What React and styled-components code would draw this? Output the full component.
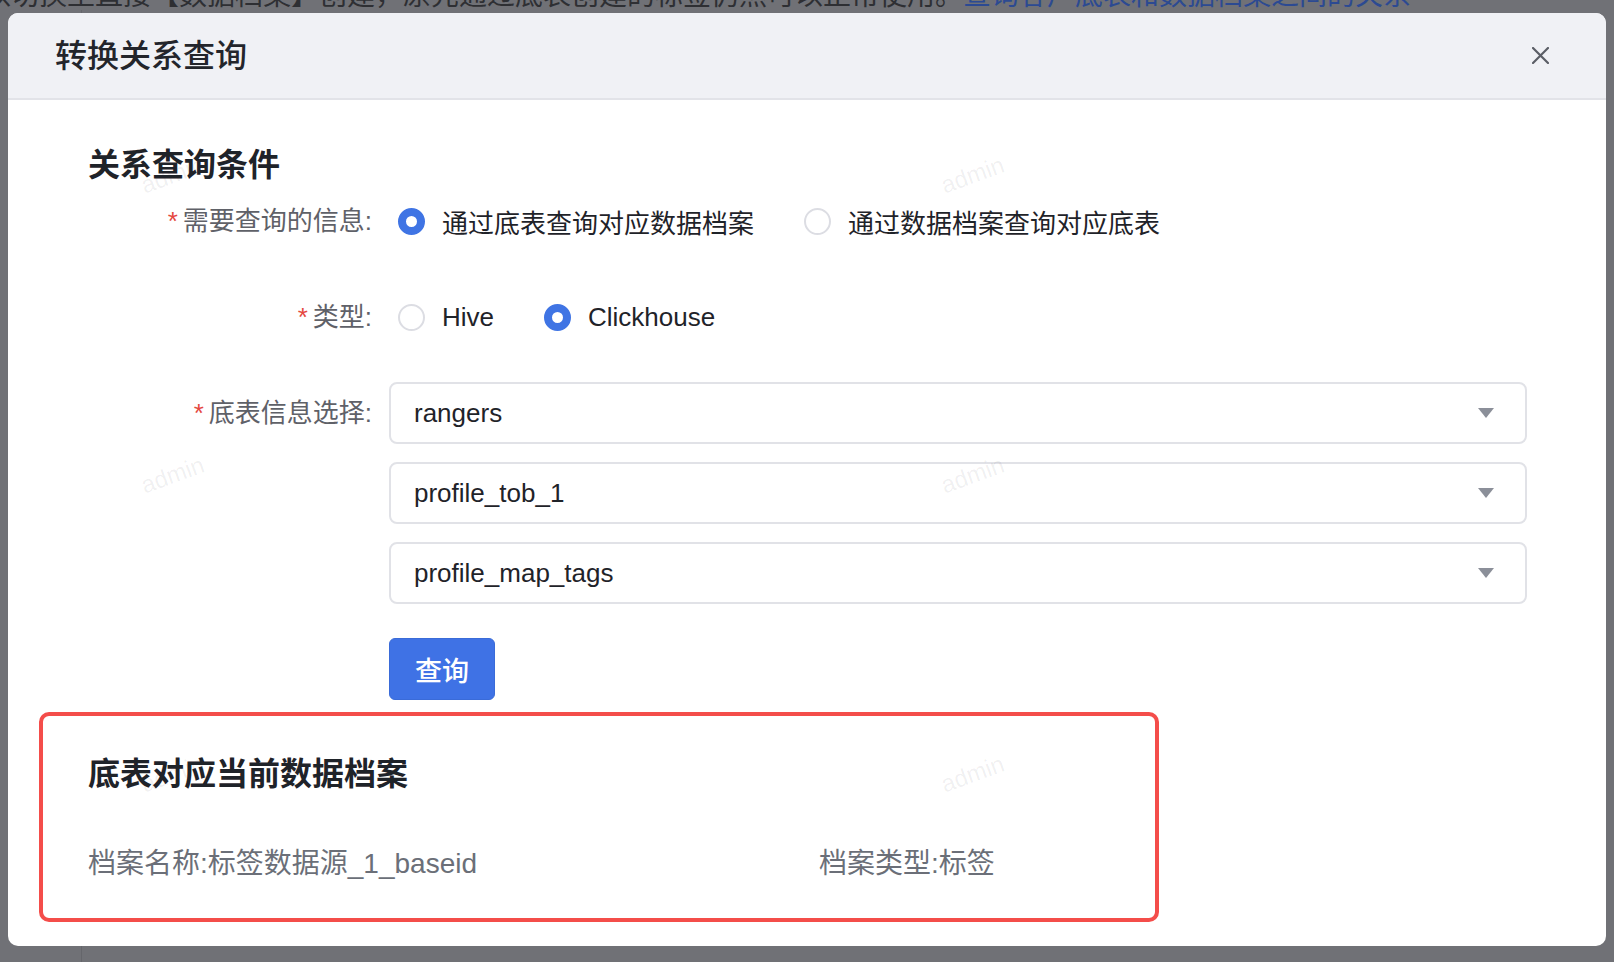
import React from "react";
import styled, { createGlobalStyle } from "styled-components";

const GlobalStyle = createGlobalStyle`
  html, body { margin: 0; padding: 0; }
  body {
    font-family: "Liberation Sans", "Noto Sans CJK SC", sans-serif;
    background: #707176;
  }
  * { box-sizing: border-box; }
`;

const Page = styled.div`
  position: relative;
  width: 1614px;
  height: 962px;
  overflow: hidden;
  background: #707176;
`;

const Backdrop = styled.div`
  display: flex;
  flex-direction: column;
  height: 100%;
`;

const PageNotice = styled.div`
  margin: -18px 0 0 -45px;
  font-size: 28px;
  line-height: 28px;
  white-space: nowrap;
  color: #2e2f33;
`;

const NoticeLink = styled.span`
  color: #2c4a92;
`;

const PageBody = styled.div`
  flex: 1;
  display: flex;
`;

const SideRail = styled.div`
  width: 82px;
  border-right: 1px solid #65666b;
`;

const Modal = styled.div`
  position: absolute;
  top: 13px;
  left: 8px;
  width: 1598px;
  height: 933px;
  background: #ffffff;
  border-radius: 10px;
  overflow: hidden;
  display: flex;
  flex-direction: column;
`;

const ModalHeader = styled.div`
  height: 87px;
  flex-shrink: 0;
  display: flex;
  align-items: center;
  justify-content: space-between;
  padding: 0 50px 0 47px;
  background: #f0f1f5;
  border-bottom: 2px solid #e2e3e8;
`;

const ModalTitle = styled.div`
  font-size: 32px;
  font-weight: 500;
  color: #23252b;
  line-height: 40px;
`;

const CloseButton = styled.button`
  width: 32px;
  height: 32px;
  padding: 0;
  border: none;
  background: transparent;
  display: flex;
  align-items: center;
  justify-content: center;
  cursor: pointer;
`;

const ModalBody = styled.div`
  position: relative;
  flex: 1;
  padding-top: 45px;
`;

const Watermark = styled.div`
  position: absolute;
  font-family: "Liberation Sans", sans-serif;
  font-size: 24px;
  line-height: 24px;
  color: rgba(40, 40, 60, 0.07);
  transform: rotate(-20deg);
  pointer-events: none;
  z-index: 2;
`;

const Section = styled.div`
  padding-left: 80px;
`;

const SectionTitle = styled.div`
  font-size: 32px;
  line-height: 40px;
  font-weight: 700;
  color: #1f2329;
  margin-bottom: 5px;
`;

const Form = styled.div`
  display: flex;
  flex-direction: column;
  gap: 34px;
`;

const FormRow = styled.div`
  display: grid;
  grid-template-columns: 284px 1138px;
  column-gap: 17px;
  align-items: start;
`;

const Label = styled.div`
  text-align: right;
  font-size: 26px;
  line-height: 62px;
  color: #5f6168;
  white-space: nowrap;
`;

const Required = styled.span`
  color: #e5483f;
  font-size: 26px;
  margin-right: 5px;
`;

const RadioGroup = styled.div`
  display: flex;
  align-items: center;
  gap: 50px;
  height: 62px;
  padding-left: 9px;
`;

const RadioOption = styled.label`
  display: inline-flex;
  align-items: center;
  gap: 17px;
  font-size: 26px;
  color: #1f2329;
  cursor: pointer;
`;

const RadioCircle = styled.span`
  width: 27px;
  height: 27px;
  border-radius: 50%;
  background: #ffffff;
  border: ${(p) => (p.$checked ? "8px solid #3f74e4" : "2px solid #dcdde3")};
  flex-shrink: 0;
`;

const SelectStack = styled.div`
  display: flex;
  flex-direction: column;
  gap: 18px;
`;

const Select = styled.div`
  height: 62px;
  border: 2px solid #e1e2e7;
  border-radius: 8px;
  display: flex;
  align-items: center;
  justify-content: space-between;
  padding: 0 31px 0 23px;
  font-size: 26px;
  color: #1f2329;
  background: #fff;
`;

const Arrow = styled.span`
  width: 0;
  height: 0;
  border-left: 8px solid transparent;
  border-right: 8px solid transparent;
  border-top: 10px solid #8b8f99;
`;

const QueryButton = styled.button`
  margin-top: 16px;
  width: 106px;
  height: 62px;
  border: 1px solid #3a6bd8;
  border-radius: 6px;
  background: #3f72e5;
  color: #ffffff;
  font-family: "Noto Sans CJK SC", sans-serif;
  font-size: 27px;
  font-weight: 500;
  padding: 0;
  cursor: pointer;
`;

const ResultBox = styled.div`
  margin: 12px 0 0 31px;
  width: 1120px;
  border: 4px solid #f44d4a;
  border-radius: 10px;
  padding: 38px 0 36px 45px;
`;

const ResultTitle = styled.div`
  font-size: 32px;
  line-height: 40px;
  font-weight: 700;
  color: #1f2329;
`;

const ResultGrid = styled.div`
  margin-top: 52px;
  display: grid;
  grid-template-columns: 731px 1fr;
`;

const ResultItem = styled.div`
  font-size: 28px;
  line-height: 36px;
  color: #6b6f78;
  white-space: nowrap;
`;

const watermarks = [
  [132, 63],
  [932, 63],
  [132, 363],
  [932, 363],
  [132, 662],
  [932, 662],
];

function Radio({ checked, children }) {
  return (
    <RadioOption>
      <RadioCircle $checked={checked} />
      <span>{children}</span>
    </RadioOption>
  );
}

export default function App() {
  return (
    <>
      <GlobalStyle />
      <Page>
        <Backdrop>
          <PageNotice>
            可以切换至直接【数据档案】创建，原先通过底表创建的标签仍然可以正常使用。
            <NoticeLink>查询客户底表和数据档案之间的关系</NoticeLink>
          </PageNotice>
          <PageBody>
            <SideRail />
          </PageBody>
        </Backdrop>

        <Modal>
          <ModalHeader>
            <ModalTitle>转换关系查询</ModalTitle>
            <CloseButton aria-label="关闭">
              <svg width="17" height="17" viewBox="0 0 17 17">
                <path
                  d="M1 1 L16 16 M16 1 L1 16"
                  stroke="#5b5e66"
                  strokeWidth="2.2"
                  strokeLinecap="round"
                />
              </svg>
            </CloseButton>
          </ModalHeader>

          <ModalBody>
            {watermarks.map(([x, y], i) => (
              <Watermark key={i} style={{ left: x, top: y }}>
                admin
              </Watermark>
            ))}

            <Section>
              <SectionTitle>关系查询条件</SectionTitle>
              <Form>
                <FormRow>
                  <Label>
                    <Required>*</Required>需要查询的信息:
                  </Label>
                  <RadioGroup>
                    <Radio checked>通过底表查询对应数据档案</Radio>
                    <Radio>通过数据档案查询对应底表</Radio>
                  </RadioGroup>
                </FormRow>

                <FormRow>
                  <Label>
                    <Required>*</Required>类型:
                  </Label>
                  <RadioGroup>
                    <Radio>Hive</Radio>
                    <Radio checked>Clickhouse</Radio>
                  </RadioGroup>
                </FormRow>

                <FormRow>
                  <Label>
                    <Required>*</Required>底表信息选择:
                  </Label>
                  <SelectStack>
                    <Select>
                      <span>rangers</span>
                      <Arrow />
                    </Select>
                    <Select>
                      <span>profile_tob_1</span>
                      <Arrow />
                    </Select>
                    <Select>
                      <span>profile_map_tags</span>
                      <Arrow />
                    </Select>
                    <div>
                      <QueryButton>查询</QueryButton>
                    </div>
                  </SelectStack>
                </FormRow>
              </Form>
            </Section>

            <ResultBox>
              <ResultTitle>底表对应当前数据档案</ResultTitle>
              <ResultGrid>
                <ResultItem>档案名称:标签数据源_1_baseid</ResultItem>
                <ResultItem>档案类型:标签</ResultItem>
              </ResultGrid>
            </ResultBox>
          </ModalBody>
        </Modal>
      </Page>
    </>
  );
}
